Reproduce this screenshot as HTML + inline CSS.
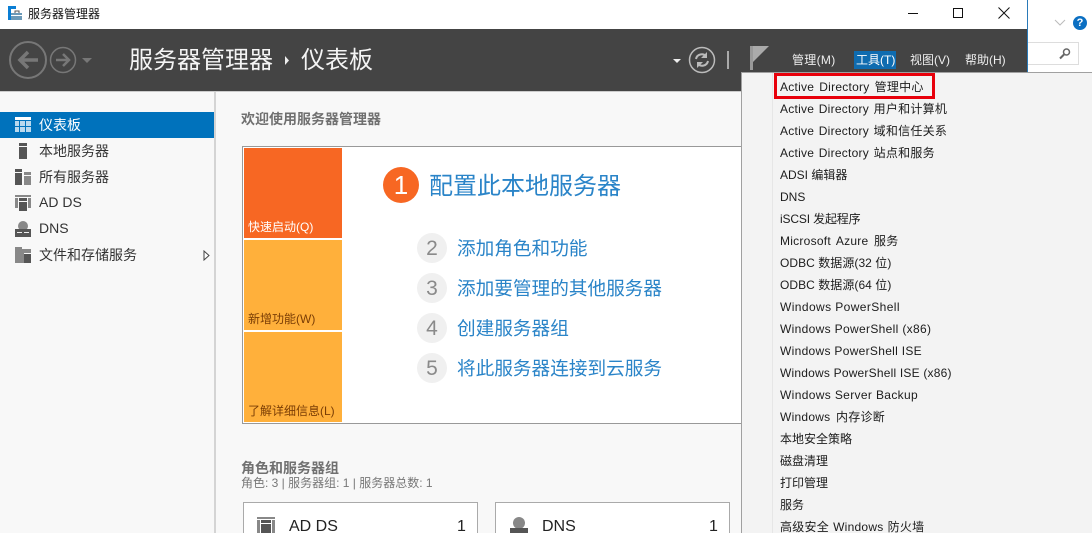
<!DOCTYPE html>
<html lang="zh-CN"><head><meta charset="utf-8"><style>
*{box-sizing:border-box}
html,body{margin:0;padding:0;width:1092px;height:533px;overflow:hidden;background:#fff;font-family:"Liberation Sans","Noto Sans CJK SC",sans-serif}
.a{position:absolute}
.t{position:absolute;white-space:nowrap;line-height:1}
.m{position:absolute;left:780px;font-size:12px;color:#1c1c1c;white-space:nowrap;line-height:22px;height:22px;letter-spacing:.25px}
.s{position:absolute;left:39px;font-size:14px;color:#333;white-space:nowrap;line-height:26px;height:26px}
.n{position:absolute;left:417px;width:30px;height:30px;border-radius:50%;background:#f0f0f0;color:#8a8a8a;font-size:21px;line-height:31px;text-align:center}
.l{position:absolute;left:457px;font-size:18.650px;color:#2a84c8;white-space:nowrap;line-height:30px}
</style></head><body>
<div class="a" style="left:0;top:0;width:1092px;height:533px;background:#fff;overflow:hidden">

<svg class="a" style="left:7px;top:5px" width="16" height="16"><rect x="1" y="1" width="8" height="3" fill="#0a7ed4"/><rect x="1" y="1" width="3" height="14" fill="#0a7ed4"/><rect x="4" y="8" width="11" height="7" fill="#6c9ab8"/><path d="M8 8V6h4v2" fill="none" stroke="#555" stroke-width="1"/><rect x="4" y="10" width="11" height="1" fill="#fff"/></svg>
<div class="t" style="left:28px;top:8px;font-size:12px;color:#111">服务器管理器</div>

<div class="a" style="left:908px;top:13px;width:10px;height:1px;background:#111"></div>
<div class="a" style="left:953px;top:8px;width:10px;height:10px;border:1px solid #111"></div>
<svg class="a" style="left:998px;top:7px" width="12" height="12"><path d="M.5.5l11 11M11.500.5l-11 11" stroke="#111" stroke-width="1"/></svg>

<div class="a" style="left:1027px;top:0;width:1px;height:72px;background:#2a7ab8"></div>
<svg class="a" style="left:1054px;top:19px" width="12" height="8"><path d="M1 1l5 5 5-5" fill="none" stroke="#bbb" stroke-width="1"/></svg>
<div class="a" style="left:1073px;top:16px;width:14px;height:14px;border-radius:50%;background:#0b6fc2;color:#fff;font-size:11px;font-weight:bold;line-height:14px;text-align:center">?</div>
<div class="a" style="left:1028px;top:42px;width:51px;height:23px;border:1px solid #ddd;border-left:0;background:#fff"></div>
<svg class="a" style="left:1058px;top:47px" width="14" height="13"><circle cx="8.500" cy="5" r="3" fill="none" stroke="#666" stroke-width="1.500"/><path d="M6 7.500L2 11.500" stroke="#666" stroke-width="2"/></svg>

<div class="a" style="left:0;top:29px;width:1027px;height:62px;background:#444"></div>
<div class="a" style="left:1027px;top:72px;width:65px;height:1px;background:#999"></div>
<svg class="a" style="left:6px;top:38px" width="90" height="44">
<circle cx="22" cy="22" r="18" fill="none" stroke="#777" stroke-width="2"/>
<path d="M32 22H15M22 14l-8 8 8 8" fill="none" stroke="#777" stroke-width="3.500"/>
<circle cx="57" cy="22" r="12.500" fill="none" stroke="#777" stroke-width="1.500"/>
<path d="M50 22H62M57 16l6 6-6 6" fill="none" stroke="#777" stroke-width="2.500"/>
<path d="M76 20h10l-5 5z" fill="#777"/>
</svg>
<div class="t" style="left:129px;top:49px;font-size:24px;color:#f4f4f4">服务器管理器</div>
<svg class="a" style="left:284px;top:56px" width="6" height="9"><path d="M1 0l4 4.500-4 4.500z" fill="#eee"/></svg>
<div class="t" style="left:301px;top:49px;font-size:24px;color:#f4f4f4">仪表板</div>

<svg class="a" style="left:673px;top:58px" width="8" height="6"><path d="M0 1h8l-4 4z" fill="#eee"/></svg>
<svg class="a" style="left:688px;top:46px" width="28" height="28"><circle cx="14" cy="14" r="12.500" fill="none" stroke="#bbb" stroke-width="1.500"/><path d="M8 13c1-5 7-6 10-3M20 15c-1 5-7 6-10 3" fill="none" stroke="#bbb" stroke-width="2"/><path d="M19 6v6h-6zM9 22v-6h6z" fill="#bbb"/></svg>
<div class="a" style="left:727px;top:51px;width:2px;height:18px;background:#aaa"></div>
<svg class="a" style="left:749px;top:45px" width="22" height="26"><rect x="1" y="1" width="3" height="24" fill="#999"/><path d="M4 1h16L4 17z" fill="#aaa"/></svg>

<div class="t" style="left:792px;top:54px;font-size:12px;color:#eee;letter-spacing:.3px">管理(M)</div>
<div class="a" style="left:854px;top:51px;width:42px;height:18px;background:#0f6cb0"></div>
<div class="t" style="left:856px;top:54px;font-size:12px;color:#fff">工具(T)</div>
<div class="t" style="left:910px;top:54px;font-size:12px;color:#eee">视图(V)</div>
<div class="t" style="left:965px;top:54px;font-size:12px;color:#eee">帮助(H)</div>

<div class="a" style="left:0;top:91px;width:741px;height:442px;background:#f8f8f8"></div>
<div class="a" style="left:0;top:91px;width:741px;height:1px;background:#ccc"></div>
<div class="a" style="left:214px;top:92px;width:2px;height:441px;background:#d4d4d4"></div>

<div class="a" style="left:0;top:112px;width:214px;height:26px;background:#0072bc"></div>
<svg class="a" style="left:15px;top:117px" width="16" height="16"><rect y="0" width="16" height="3" fill="#fff"/><path d="M0 4h4v5H0zM5 4h5v5H5zM11 4h5v5h-5zM0 10h4v5H0zM5 10h5v5H5zM11 10h5v5h-5z" fill="#b9d9ee"/></svg>
<div class="s" style="color:#fff;top:112px">仪表板</div>
<svg class="a" style="left:19px;top:143px" width="8" height="16"><rect width="8" height="3" fill="#555"/><rect y="4" width="8" height="12" fill="#555"/></svg>
<div class="s" style="top:138px">本地服务器</div>
<svg class="a" style="left:15px;top:169px" width="16" height="16"><rect width="7" height="3" fill="#555"/><rect y="4" width="7" height="12" fill="#555"/><rect x="9" y="3" width="7" height="3" fill="#888"/><rect x="9" y="7" width="7" height="9" fill="#888"/></svg>
<div class="s" style="top:164px">所有服务器</div>
<svg class="a" style="left:15px;top:195px" width="16" height="16"><path d="M0 0h16v2H0zM0 3h3v10H0zM13 3h3v10h-3z" fill="#888"/><rect x="4" y="3" width="8" height="3" fill="#555"/><rect x="4" y="7" width="8" height="9" fill="#555"/></svg>
<div class="s" style="top:189px">AD DS</div>
<svg class="a" style="left:15px;top:221px" width="16" height="16"><circle cx="8" cy="5" r="5" fill="#888"/><rect y="8" width="16" height="8" fill="#555"/><rect x="2" y="11" width="5" height="1" fill="#eee"/><rect x="9" y="11" width="5" height="1" fill="#eee"/></svg>
<div class="s" style="top:215px">DNS</div>
<svg class="a" style="left:15px;top:247px" width="16" height="16"><path d="M0 0h7v2h9v4H9v10H0z" fill="#888"/><rect x="9" y="7" width="7" height="9" fill="#555"/></svg>
<div class="s" style="top:242px">文件和存储服务</div>
<svg class="a" style="left:203px;top:250px" width="7" height="11"><path d="M1 1l5 4.500-5 4.500z" fill="#fff" stroke="#444"/></svg>

<div class="t" style="left:241px;top:112px;font-size:14px;font-weight:bold;color:#707070">欢迎使用服务器管理器</div>

<div class="a" style="left:242px;top:146px;width:500px;height:278px;background:#fff;border:1px solid #999;border-right:0"></div>
<div class="a" style="left:244px;top:148px;width:98px;height:90px;background:#f76723"></div>
<div class="a" style="left:244px;top:240px;width:98px;height:90px;background:#ffb03b"></div>
<div class="a" style="left:244px;top:332px;width:98px;height:90px;background:#ffb03b"></div>
<div class="t" style="left:248px;top:221px;font-size:12px;color:#fff">快速启动(Q)</div>
<div class="t" style="left:248px;top:313px;font-size:12px;color:#7a3d05">新增功能(W)</div>
<div class="t" style="left:248px;top:405px;font-size:12px;color:#7a3d05">了解详细信息(L)</div>

<div class="a" style="left:383px;top:167px;width:36px;height:36px;border-radius:50%;background:#f76723;color:#fff;font-size:26px;line-height:36px;text-align:center">1</div>
<div class="t" style="left:429px;top:175px;font-size:24px;color:#2a84c8">配置此本地服务器</div>
<div class="n" style="top:233px">2</div><div class="l" style="top:234px">添加角色和功能</div>
<div class="n" style="top:273px">3</div><div class="l" style="top:274px">添加要管理的其他服务器</div>
<div class="n" style="top:313px">4</div><div class="l" style="top:314px">创建服务器组</div>
<div class="n" style="top:353px">5</div><div class="l" style="top:354px">将此服务器连接到云服务</div>

<div class="t" style="left:241px;top:461px;font-size:14px;font-weight:bold;color:#707070">角色和服务器组</div>
<div class="t" style="left:241px;top:477px;font-size:12px;color:#777">角色: 3 | 服务器组: 1 | 服务器总数: 1</div>

<div class="a" style="left:243px;top:502px;width:235px;height:40px;background:#fff;border:1px solid #aaa"></div>
<div class="a" style="left:495px;top:502px;width:235px;height:40px;background:#fff;border:1px solid #aaa"></div>
<svg class="a" style="left:257px;top:517px" width="18" height="16"><path d="M0 0h18v2H0zM0 3h3v13H0zM15 3h3v13h-3z" fill="#888"/><rect x="4" y="3" width="10" height="3" fill="#555"/><rect x="4" y="7" width="10" height="9" fill="#555"/></svg>
<div class="t" style="left:289px;top:519px;font-size:16px;color:#222">AD DS</div>
<div class="t" style="left:457px;top:519px;font-size:16px;color:#222">1</div>
<svg class="a" style="left:510px;top:517px" width="18" height="16"><circle cx="9" cy="6" r="6" fill="#888"/><rect y="11" width="18" height="5" fill="#555"/></svg>
<div class="t" style="left:542px;top:519px;font-size:16px;color:#222">DNS</div>
<div class="t" style="left:709px;top:519px;font-size:16px;color:#222">1</div>

<div class="a" style="left:741px;top:72px;width:351px;height:461px;background:#f3f3f3;border:1px solid #a0a0a0;border-right:0;border-bottom:0"></div>
<div class="a" style="left:772px;top:73px;width:1px;height:460px;background:#e6e6e6"></div>

<div class="m" style="top:76px;word-spacing:1.500px">Active Directory 管理中心</div>
<div class="m" style="top:98px;word-spacing:1px">Active Directory 用户和计算机</div>
<div class="m" style="top:120px;word-spacing:1px">Active Directory 域和信任关系</div>
<div class="m" style="top:142px;word-spacing:1px">Active Directory 站点和服务</div>
<div class="m" style="top:164px;letter-spacing:0">ADSI 编辑器</div>
<div class="m" style="top:186px;letter-spacing:0">DNS</div>
<div class="m" style="top:208px;letter-spacing:-.150px">iSCSI 发起程序</div>
<div class="m" style="top:230px;word-spacing:2px">Microsoft Azure 服务</div>
<div class="m" style="top:252px;letter-spacing:.050px">ODBC 数据源(32 位)</div>
<div class="m" style="top:274px;letter-spacing:.050px">ODBC 数据源(64 位)</div>
<div class="m" style="top:296px;letter-spacing:.400px">Windows PowerShell</div>
<div class="m" style="top:318px;letter-spacing:.330px">Windows PowerShell (x86)</div>
<div class="m" style="top:340px;letter-spacing:.300px">Windows PowerShell ISE</div>
<div class="m" style="top:362px;letter-spacing:.200px">Windows PowerShell ISE (x86)</div>
<div class="m" style="top:384px;letter-spacing:.350px">Windows Server Backup</div>
<div class="m" style="top:406px;word-spacing:2px">Windows 内存诊断</div>
<div class="m" style="top:428px;letter-spacing:0">本地安全策略</div>
<div class="m" style="top:450px;letter-spacing:0">磁盘清理</div>
<div class="m" style="top:472px;letter-spacing:0">打印管理</div>
<div class="m" style="top:494px;letter-spacing:0">服务</div>
<div class="m" style="top:516px;word-spacing:.500px">高级安全 Windows 防火墙</div>

<div class="a" style="left:774px;top:73px;width:161px;height:26px;border:3px solid #e8000b"></div>
</div>
</body></html>
